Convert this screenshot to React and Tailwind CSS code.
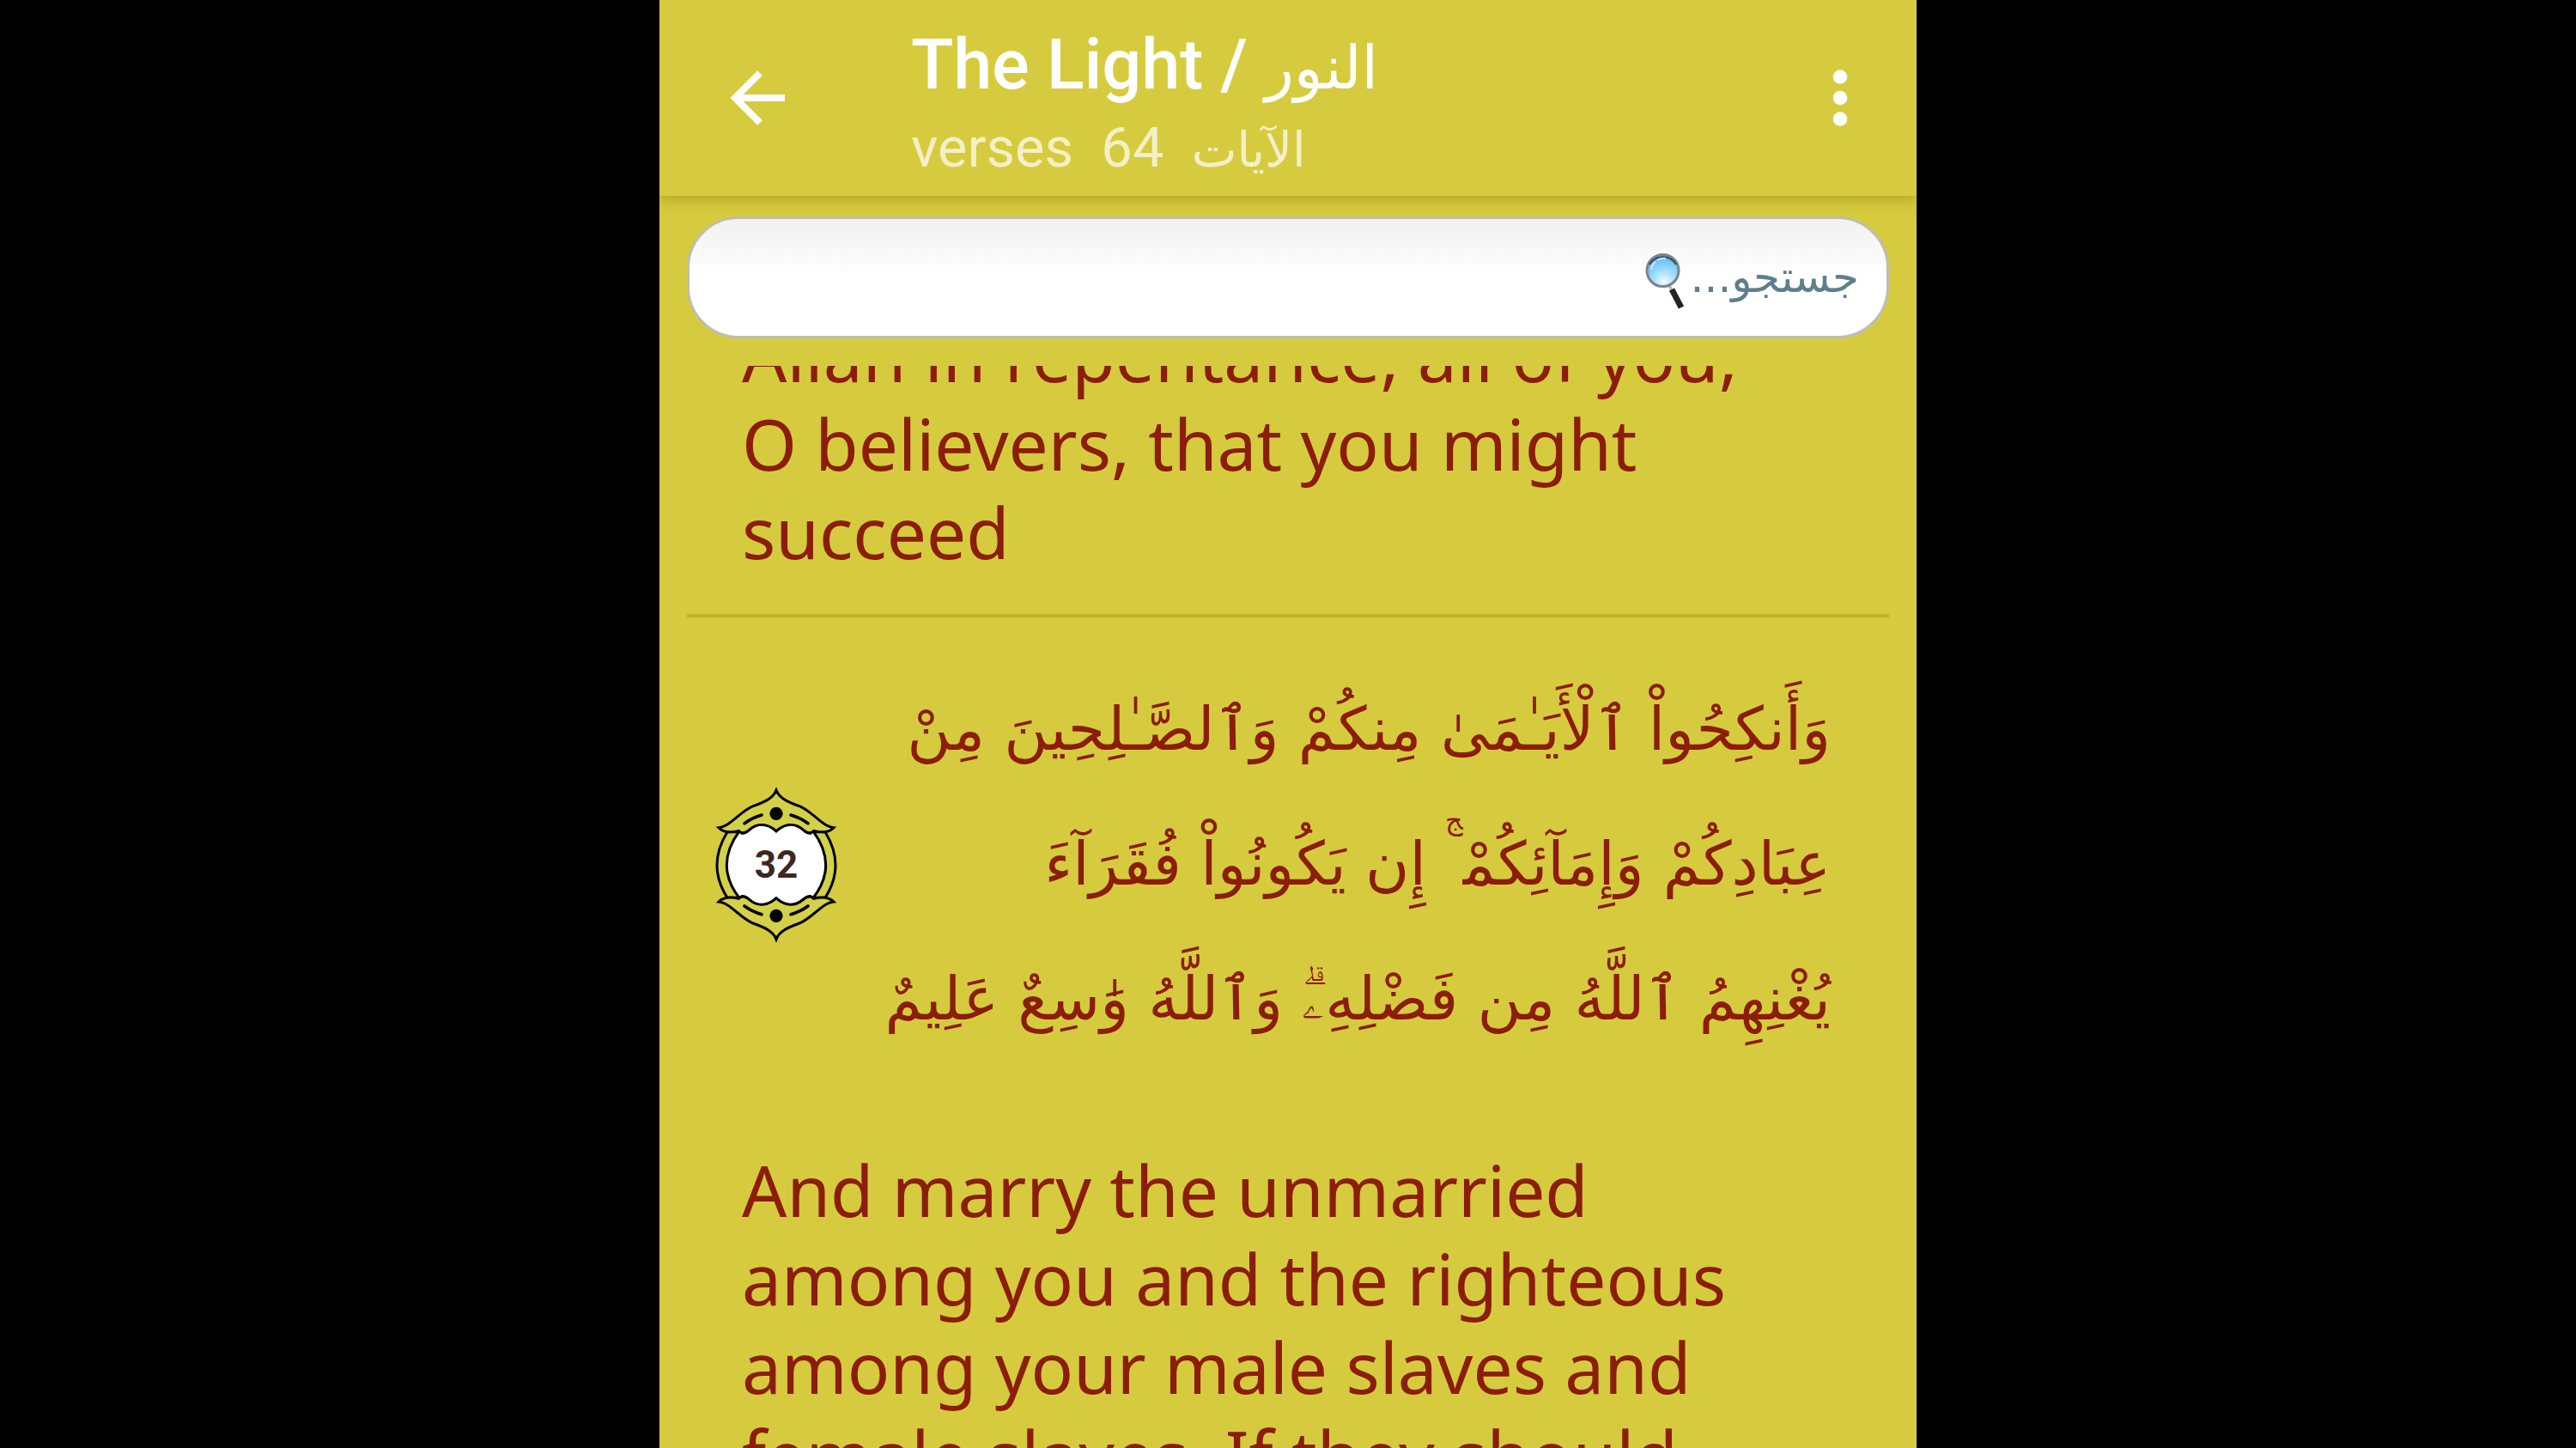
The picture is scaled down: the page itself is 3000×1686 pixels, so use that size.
import React, { useState } from "react";

const LATIN_TEXT = "font-['Noto_Sans',sans-serif] text-[82px] leading-[103px] text-[#8b1d0a]";
const QURAN_TEXT = "font-['DejaVu_Sans',sans-serif] text-[70px] leading-[157px] text-[#8b1d0a]";

const PREVIOUS_LINES = [
  "Allah in repentance, all of you,",
  "O believers, that you might",
  "succeed",
];

const VERSE = {
  number: 32,
  // a line is split in two where a raised pause mark stands
  arabic: [
    { text: "وَأَنكِحُواْ ٱلْأَيَـٰمَىٰ مِنكُمْ وَٱلصَّـٰلِحِينَ مِنْ" },
    { text: "عِبَادِكُمْ وَإِمَآئِكُمْ", pause: "ج", rest: " إِن يَكُونُواْ فُقَرَآءَ" },
    { text: "يُغْنِهِمُ ٱللَّهُ مِن فَضْلِهِۦۗ وَٱللَّهُ وَٰسِعٌ عَلِيمٌ" },
  ],
  english: [
    "And marry the unmarried",
    "among you and the righteous",
    "among your male slaves and",
    "female slaves. If they should",
  ],
};

const BackIcon = () => (
  <svg viewBox="0 0 66 66" className="w-[66px] h-[66px]" fill="none" stroke="white" strokeWidth="8">
    <path d="M66 33H8M37 4L8 33l29 29" />
  </svg>
);

const MoreIcon = () => (
  <svg viewBox="0 0 18 66" className="w-[18px] h-[66px]" fill="white">
    <circle cx="9" cy="8.5" r="8.3" />
    <circle cx="9" cy="33" r="8.3" />
    <circle cx="9" cy="57.5" r="8.3" />
  </svg>
);

const LensIcon = () => (
  <svg viewBox="0 0 46 68" className="w-[46px] h-[68px]">
    <defs>
      <radialGradient id="lens" cx="0.55" cy="0.85" r="0.9">
        <stop offset="0" stopColor="#f4fbff" />
        <stop offset="0.4" stopColor="#a0deff" />
        <stop offset="1" stopColor="#4fb0f5" />
      </radialGradient>
    </defs>
    <path d="M28 39l4 6" stroke="#b5b5b5" strokeWidth="3" />
    <path d="M31 43l11 21" stroke="#222" strokeWidth="7" />
    <circle cx="20.5" cy="21" r="18.5" fill="url(#lens)" stroke="#7d838a" strokeWidth="3" />
    <path d="M5 14a18 18 0 0 1 31 0" fill="none" stroke="#34495c" strokeWidth="2" />
    <path d="M7 20a14 14 0 0 1 5-9M14 9a14 14 0 0 1 10-2" fill="none" stroke="#c5eaff" strokeWidth="2" />
  </svg>
);

const Ornament = () => (
  <>
    <path
      d="M253 52C243 82 205 96 172 108C128 125 92 180 52 183C68 200 94 201 122 194C130 205 145 203 158 192C188 166 222 168 253 196C284 168 318 166 348 192C361 203 376 205 384 194C412 201 438 200 454 183C414 180 378 125 334 108C301 96 263 82 253 52Z"
      fill="#d3d149"
    />
    <path d="M142 168Q170 148 202 139M364 168Q336 148 304 139" fill="none" strokeWidth="11" strokeLinecap="round" />
    <circle cx="253" cy="134" r="23" fill="black" stroke="none" />
  </>
);

const VerseBadge = ({ number }) => (
  <div className="relative flex items-center justify-center w-[144px] h-[180px] shrink-0">
    <svg viewBox="37 43 432 540" className="absolute inset-0 w-full h-full" stroke="black" strokeWidth="9">
      <path d="M82 198Q10 315 82 428H424Q496 315 424 198Z" fill="#d3d149" />
      <path d="M125 194Q35 315 125 430H381Q471 315 381 194Z" fill="white" />
      <Ornament />
      <g transform="matrix(1 0 0 -1 0 625)">
        <Ornament />
      </g>
      {/* white lobes that run up under both ornaments */}
      <path
        d="M130 202C140 205 148 201 158 192C188 166 222 168 253 196C284 168 318 166 348 192C358 201 366 205 376 202V423C366 420 358 424 348 433C318 459 284 457 253 429C222 457 188 459 158 433C148 424 140 420 130 423Z"
        fill="white"
        stroke="none"
      />
      <path d="M130 202C140 205 148 201 158 192C188 166 222 168 253 196C284 168 318 166 348 192C358 201 366 205 376 202" fill="none" />
      <path d="M130 423C140 420 148 424 158 433C188 459 222 457 253 429C284 457 318 459 348 433C358 424 366 420 376 423" fill="none" />
    </svg>
    <span className="relative font-[Roboto,sans-serif] font-bold text-[44px] leading-none text-[#3e2723]">{number}</span>
  </div>
);

const Header = () => (
  <header className="relative flex items-center h-[228px] shrink-0 px-20 bg-[#d6cb3e] shadow-[0_4px_16px_rgba(120,100,0,0.4)]">
    <button aria-label="Back" className="mr-[147px]">
      <BackIcon />
    </button>
    <div className="flex-1 pt-5 font-[Roboto,'DejaVu_Sans',sans-serif] text-white whitespace-nowrap">
      <h1 className="text-[81px] leading-[96px] font-medium">
        The Light / <span className="font-normal text-[70px] leading-none">النور</span>
      </h1>
      <p className="text-[65px] leading-[96px] text-white/70 whitespace-pre">
        verses  64  <span className="text-[56px] leading-none">الآيات</span>
      </p>
    </div>
    <button aria-label="More options">
      <MoreIcon />
    </button>
  </header>
);

export default function App() {
  const [query, setQuery] = useState("");

  return (
    <div className="h-screen bg-black">
      <div className="flex flex-col h-full w-[48.8%] mx-auto bg-[#d6cb3e] overflow-hidden">
        <Header />

        <div dir="rtl" className="relative mx-8 mt-6">
          <input
            type="text"
            aria-label="جستجو"
            value={query}
            onChange={(e) => setQuery(e.target.value)}
            placeholder="جستجو..."
            className="block w-full h-[142px] px-8 rounded-[60px] border-3 border-[#bdbdb0] bg-linear-to-b from-[#f1f1f1] to-white to-50% font-['DejaVu_Sans',sans-serif] text-[50px] text-[#607d8b] placeholder-[#607d8b] outline-none"
          />
          {!query && (
            <span className="absolute top-[42px] right-[238px] pointer-events-none">
              <LensIcon />
            </span>
          )}
        </div>

        {/* Verse list, scrolled part way through the previous verse */}
        <main className="flex-1 min-h-0 mt-8 overflow-hidden">
          <article className={LATIN_TEXT + " -mt-16 mx-8 pl-16 pb-11 border-b-4 border-[#beb32f] whitespace-nowrap"}>
            {PREVIOUS_LINES.map((line) => (
              <p key={line}>{line}</p>
            ))}
          </article>

          <article>
            <div className="flex items-center justify-between pl-16 pr-[100px] pt-13">
              <VerseBadge number={VERSE.number} />
              <div dir="rtl" lang="ar" className={QURAN_TEXT + " whitespace-nowrap"}>
                {VERSE.arabic.map(({ text, pause, rest }) => (
                  <p key={text}>
                    {text}
                    {pause && <sup className="text-[32px] leading-none -top-16">{pause}</sup>}
                    {rest}
                  </p>
                ))}
              </div>
            </div>
            <div className={LATIN_TEXT + " mt-23 pl-24 whitespace-nowrap"}>
              {VERSE.english.map((line) => (
                <p key={line}>{line}</p>
              ))}
            </div>
          </article>
        </main>
      </div>
    </div>
  );
}
